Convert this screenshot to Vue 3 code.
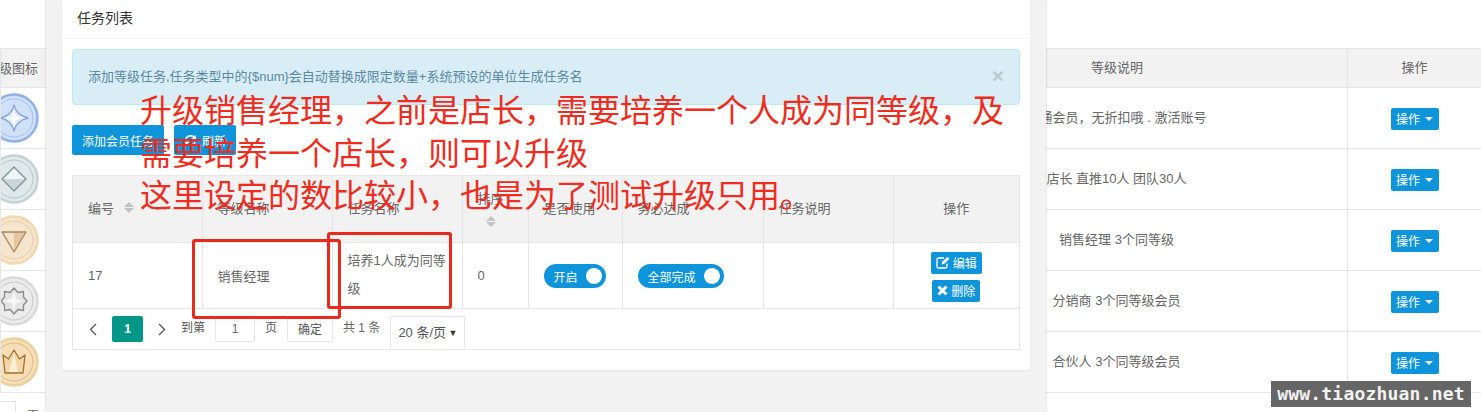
<script setup>
const levels = [
  { desc: "普通会员，无折扣哦 . 激活账号", ring: "#8fb2ea", fill: "#cfe0f8", inner: "#a3c0ee", line: "#8aa6d8", mark: "#dfeafa", shape: "M13 0 Q15 10 27 13 Q15 16 13 26 Q11 16 0 13 Q11 10 13 0Z", facet: "M13 3 L15 11 L24 13 L15 15 L13 23 L11 15 L3 13 L11 11Z", tint: "#f6fafe" },
  { desc: "店长 直推10人 团队30人", ring: "#c3d2d3", fill: "#e0e9e9", inner: "#b4c6c8", line: "#7f9397", mark: "#c9d6da", shape: "M13 1 L25 13 L13 25 L1 13Z", facet: "M13 2.500 L23.500 13 H2.500Z", tint: "#f0f6f8" },
  { desc: "销售经理 3个同等级", ring: "#f0d7b0", fill: "#f6e5cd", inner: "#e9cca0", line: "#a68a68", mark: "#e6c6a2", shape: "M1 5 H25 L13 25Z", facet: "M3 6 H13 V23Z", tint: "#f5e2cb" },
  { desc: "分销商 3个同等级会员", ring: "#d9d9d9", fill: "#ececec", inner: "#c6c6c6", line: "#8b8b8b", mark: "#e4e4e4", shape: "M13 0 L17 4.500 L22.500 3.500 L22.500 9 L26 13 L22.500 17 L22.500 22.500 L17 21.500 L13 26 L9 21.500 L3.500 22.500 L3.500 17 L0 13 L3.500 9 L3.500 3.500 L9 4.500Z", facet: "M13 3 L15 11 L23 13 L15 15 L13 23 L11 15 L3 13 L11 11Z", tint: "#f7f7f7" },
  { desc: "合伙人 3个同等级会员", ring: "#ead09f", fill: "#f6dfb8", inner: "#dab878", line: "#a4722f", mark: "#f3d6a6", shape: "M2 6 L7.500 10 L13 1 L18.500 10 L24 6 L22 24 H4Z", facet: "M13 4 L17 23 H8Z", tint: "#fbeed8" },
];
</script>

<template>
  <div class="page">
    <table class="level-table">
      <colgroup>
        <col style="width: 46px" />
        <col style="width: 840px" />
        <col style="width: 461px" />
        <col style="width: 134px" />
      </colgroup>
      <thead>
        <tr>
          <th class="clip"><span class="clip-title">等级图标</span></th>
          <th></th>
          <th>等级说明</th>
          <th>操作</th>
        </tr>
      </thead>
      <tbody>
        <tr v-for="item in levels" :key="item.desc">
          <td class="clip">
            <svg class="medal" viewBox="0 0 50 50" width="50" height="50">
              <circle cx="25" cy="25" r="23.500" :fill="item.fill" :stroke="item.ring" stroke-width="2.500" />
              <circle cx="25" cy="25" r="19" fill="none" :stroke="item.inner" stroke-width="1" />
              <path :d="item.shape" transform="translate(12 12)" :fill="item.mark" :stroke="item.line" stroke-width="1.300" stroke-linejoin="round" />
              <path :d="item.facet" transform="translate(12 12)" :fill="item.tint" />
            </svg>
          </td>
          <td></td>
          <td class="desc">{{ item.desc }}</td>
          <td class="op">
            <button class="btn small">操作<i class="caret"></i></button>
          </td>
        </tr>
      </tbody>
    </table>
    <div class="under-pager">
      <span class="under-input"></span>
      <span class="under-unit">页</span>
    </div>

    <div class="modal">
      <div class="panel">
        <div class="panel-title">任务列表</div>
        <div class="panel-body">
          <div class="alert">
            <span>添加等级任务,任务类型中的{$num}会自动替换成限定数量+系统预设的单位生成任务名</span>
            <span class="alert-close">×</span>
          </div>

          <div class="toolbar">
            <button class="btn">添加会员任务</button>
            <button class="btn">
              <svg width="13" height="13" viewBox="0 0 14 14" fill="none" stroke="#fff" stroke-width="1.600">
                <path d="M12 5 A5.500 5.500 0 0 0 2 5" />
                <path d="M2 9 A5.500 5.500 0 0 0 12 9" />
                <path d="M12 1.500 V5 H8.500 M2 12.500 V9 H5.500" />
              </svg>
              刷新
            </button>
          </div>

          <div class="task-box">
            <table class="task-table">
              <colgroup>
                <col style="width: 129px" />
                <col style="width: 130px" />
                <col style="width: 130px" />
                <col style="width: 66px" />
                <col style="width: 94px" />
                <col style="width: 141px" />
                <col style="width: 130px" />
                <col style="width: 126px" />
              </colgroup>
              <thead>
                <tr>
                  <th><span class="th-sort">编号<i class="sort"></i></span></th>
                  <th>等级名称</th>
                  <th>任务名称</th>
                  <th><span class="th-stack">排序<i class="sort"></i></span></th>
                  <th>是否使用</th>
                  <th>务必达成</th>
                  <th>任务说明</th>
                  <th class="center">操作</th>
                </tr>
              </thead>
              <tbody>
                <tr>
                  <td>17</td>
                  <td>销售经理</td>
                  <td class="wrap">培养1人成为同等级</td>
                  <td>0</td>
                  <td class="plain"><span class="switch">开启<i class="knob"></i></span></td>
                  <td class="plain"><span class="switch">全部完成<i class="knob"></i></span></td>
                  <td></td>
                  <td class="center actions">
                    <button class="btn tiny">
                      <svg width="14" height="13" viewBox="0 0 14 13" fill="none" stroke="#fff">
                        <path d="M11 7.500 V10.500 Q11 12 9.500 12 H2.500 Q1 12 1 10.500 V3.500 Q1 2 2.500 2 H8" stroke-width="1.300" />
                        <path d="M5.500 8.500 L6 6 L11.500 0.800 L13.500 2.800 L8 8Z" fill="#fff" stroke="none" />
                      </svg>
                      编辑
                    </button>
                    <button class="btn tiny">
                      <svg width="11" height="11" viewBox="0 0 11 11" stroke="#fff" stroke-width="3">
                        <path d="M1.500 1.500 L9.500 9.500 M9.500 1.500 L1.500 9.500" />
                      </svg>
                      删除
                    </button>
                  </td>
                </tr>
              </tbody>
            </table>
            <div class="pager">
              <svg class="arrow first" width="8" height="13" viewBox="0 0 8 13" fill="none" stroke="#555" stroke-width="1.300"><path d="M7 1 L1.500 6.500 L7 12" /></svg>
              <span class="page-on">1</span>
              <svg class="arrow" width="8" height="13" viewBox="0 0 8 13" fill="none" stroke="#555" stroke-width="1.300"><path d="M1 1 L6.500 6.500 L1 12" /></svg>
              <span class="go">到第</span>
              <span class="page-input">1</span>
              <span class="unit">页</span>
              <span class="page-ok">确定</span>
              <span class="total">共 1 条</span>
              <span class="size">20 条/页<i class="size-arrow">▼</i></span>
            </div>
          </div>
        </div>
      </div>
    </div>

    <div class="note">
      升级销售经理，之前是店长，需要培养一个人成为同等级，及需要培养一个店长，则可以升级<br />这里设定的数比较小，也是为了测试升级只用。
    </div>
    <div class="mark mark-name"></div>
    <div class="mark mark-task"></div>
    <div class="watermark">www.tiaozhuan.net</div>
  </div>
</template>

<style scoped>
.page {
  position: relative;
  width: 1481px;
  height: 412px;
  overflow: hidden;
  padding-top: 48px;
  box-sizing: border-box;
  background: #fff;
  font-family: "Liberation Sans", "Noto Sans CJK SC", sans-serif;
  font-size: 13px;
  color: #666;
}

table {
  border-collapse: collapse;
  table-layout: fixed;
}

.level-table {
  width: 1481px;
}

.level-table th,
.level-table td {
  border: 1px solid #e6e6e6;
  padding: 0;
  text-align: center;
  font-weight: 400;
}

.level-table thead tr {
  height: 39px;
}

.level-table tbody tr {
  height: 61px;
}

.level-table th {
  padding-bottom: 3px;
  background: #f2f2f2;
}

.level-table .clip {
  overflow: hidden;
  position: relative;
}

.clip-title {
  position: absolute;
  left: -15px;
  top: 9px;
  white-space: nowrap;
}

.medal {
  position: absolute;
  left: -12px;
  top: 5px;
}

.level-table .desc {
  padding: 0 1px 3px 0;
}

.level-table .op {
  padding-top: 1px;
}

.btn {
  border: 0;
  border-radius: 2px;
  background: #0e94db;
  color: #fff;
  font: inherit;
  font-size: 12px;
  height: 30px;
  padding: 0 10px;
  display: inline-flex;
  align-items: center;
  justify-content: center;
  gap: 5px;
}

.small {
  width: 48px;
  height: 22px;
  padding: 0;
  font-size: 12px;
}

.caret {
  width: 0;
  height: 0;
  border: 4px solid transparent;
  border-top-color: #fff;
  border-bottom: 0;
}

.under-pager {
  display: flex;
  align-items: flex-start;
  gap: 11px;
  margin-top: 8px;
  margin-left: -20px;
}

.under-input {
  width: 34px;
  height: 26px;
  border: 1px solid #e6e6e6;
}

.under-unit {
  font-size: 12px;
  margin-top: 5px;
}

.modal {
  position: absolute;
  left: 46px;
  top: 0;
  width: 1000px;
  height: 412px;
  box-sizing: border-box;
  padding: 0 16px;
  background: #f2f2f2;
  box-shadow: 0 0 2px rgba(0, 0, 0, 0.25);
}

.panel {
  height: 370px;
  border-radius: 2px;
  background: #fff;
  box-shadow: 0 1px 2px rgba(0, 0, 0, 0.05);
}

.panel-title {
  height: 38px;
  line-height: 37px;
  padding-left: 15px;
  border-bottom: 1px solid #f6f6f6;
  font-size: 14px;
  color: #333;
}

.panel-body {
  padding: 10px 10px 0;
}

.alert {
  display: flex;
  justify-content: space-between;
  align-items: center;
  height: 56px;
  box-sizing: border-box;
  padding: 0 15px 4px;
  border: 1px solid #bce8f1;
  border-radius: 4px;
  background: #d9edf7;
  color: #5a8aa3;
}

.alert-close {
  margin-top: 2px;
  font-size: 21px;
  font-weight: 700;
  color: #bcc9cf;
}

.toolbar {
  display: flex;
  gap: 10px;
  margin: 20px 0;
}

.task-box {
  width: 948px;
  box-sizing: border-box;
  border: 1px solid #e6e6e6;
}

.task-table {
  width: 946px;
}

.task-table th,
.task-table td {
  border: 1px solid #e6e6e6;
  padding: 0 15px;
  text-align: left;
  font-weight: 400;
}

.task-table th {
  padding-bottom: 3px;
  background: #f2f2f2;
}

.task-table tr > :first-child {
  border-left: 0;
}

.task-table tr > :last-child {
  border-right: 0;
}

.task-table thead tr > * {
  border-top: 0;
}

.task-table tr {
  height: 66px;
}

.task-table .plain {
  padding-top: 2px;
}

.task-table .center {
  padding: 0 0 3px;
  text-align: center;
}

.task-table .actions {
  padding: 3px 0 0;
}

.task-table .wrap {
  line-height: 28px;
}

.th-sort {
  display: inline-flex;
  align-items: center;
  gap: 10px;
}

.th-stack {
  display: inline-flex;
  flex-direction: column;
  align-items: center;
  gap: 9px;
}

.sort {
  display: flex;
  flex-direction: column;
  gap: 1px;
  width: 10px;
}

.sort::before,
.sort::after {
  content: "";
  width: 0;
  height: 0;
  border: 5px solid transparent;
}

.sort::before {
  border-top: 0;
  border-bottom-color: #c2c2c2;
}

.sort::after {
  border-bottom: 0;
  border-top-color: #c2c2c2;
}

.switch {
  display: inline-flex;
  align-items: center;
  justify-content: space-between;
  height: 24px;
  padding: 0 4px 0 10px;
  gap: 8px;
  border-radius: 12px;
  background: #0e94db;
  color: #fff;
  font-size: 12px;
}

.knob {
  width: 16px;
  height: 16px;
  border-radius: 50%;
  background: #fff;
}

.tiny {
  height: 22px;
  padding: 0 5px;
  gap: 3px;
  display: flex;
  margin: 0 auto;
}

.tiny + .tiny {
  margin-top: 6px;
}

.pager {
  display: flex;
  align-items: flex-start;
  height: 40px;
  padding-top: 7px;
  box-sizing: border-box;
  font-size: 12px;
}

.arrow {
  margin-top: 7px;
}

.arrow.first {
  margin-left: 16px;
  margin-right: 15px;
}

.page-on {
  width: 31px;
  height: 26px;
  margin-right: 15px;
  line-height: 26px;
  border-radius: 2px;
  background: #009688;
  color: #fff;
  font-weight: 700;
  text-align: center;
}

.go {
  margin-left: 15px;
  line-height: 25px;
  color: #555;
}

.page-input {
  width: 40px;
  height: 26px;
  box-sizing: border-box;
  margin-left: 10px;
  border: 1px solid #e6e6e6;
  border-radius: 2px;
  line-height: 24px;
  text-align: center;
}

.unit {
  margin: 0 10px;
  line-height: 25px;
  color: #555;
}

.page-ok {
  width: 46px;
  height: 26px;
  box-sizing: border-box;
  border: 1px solid #e6e6e6;
  border-radius: 2px;
  line-height: 26px;
  text-align: center;
  color: #555;
}

.total {
  margin-left: 10px;
  line-height: 25px;
}

.size {
  display: flex;
  justify-content: space-between;
  width: 75px;
  height: 32px;
  box-sizing: border-box;
  margin-left: 10px;
  padding: 0 7px;
  border: 1px solid #e6e6e6;
  border-bottom: 0;
  font-size: 13px;
  line-height: 32px;
  color: #555;
}

.size-arrow {
  font-size: 9px;
  font-style: normal;
  color: #333;
}

.note {
  position: absolute;
  left: 140px;
  top: 87px;
  width: 870px;
  font-family: "Noto Sans CJK SC", sans-serif;
  font-size: 32px;
  line-height: 42.500px;
  color: #ee2c20;
}

.mark {
  position: absolute;
  box-sizing: border-box;
  border: 3px solid #e8291c;
  border-radius: 3px;
}

.mark-name {
  left: 192px;
  top: 239px;
  width: 149px;
  height: 80px;
}

.mark-task {
  left: 327px;
  top: 232px;
  width: 125px;
  height: 77px;
}

.watermark {
  position: absolute;
  left: 1271px;
  top: 381px;
  width: 200px;
  height: 26px;
  background: #666;
  color: #f2f2f2;
  font-family: "DejaVu Sans Mono", monospace;
  font-size: 18px;
  font-weight: 700;
  letter-spacing: 0.200px;
  line-height: 26px;
  text-align: center;
}
</style>
